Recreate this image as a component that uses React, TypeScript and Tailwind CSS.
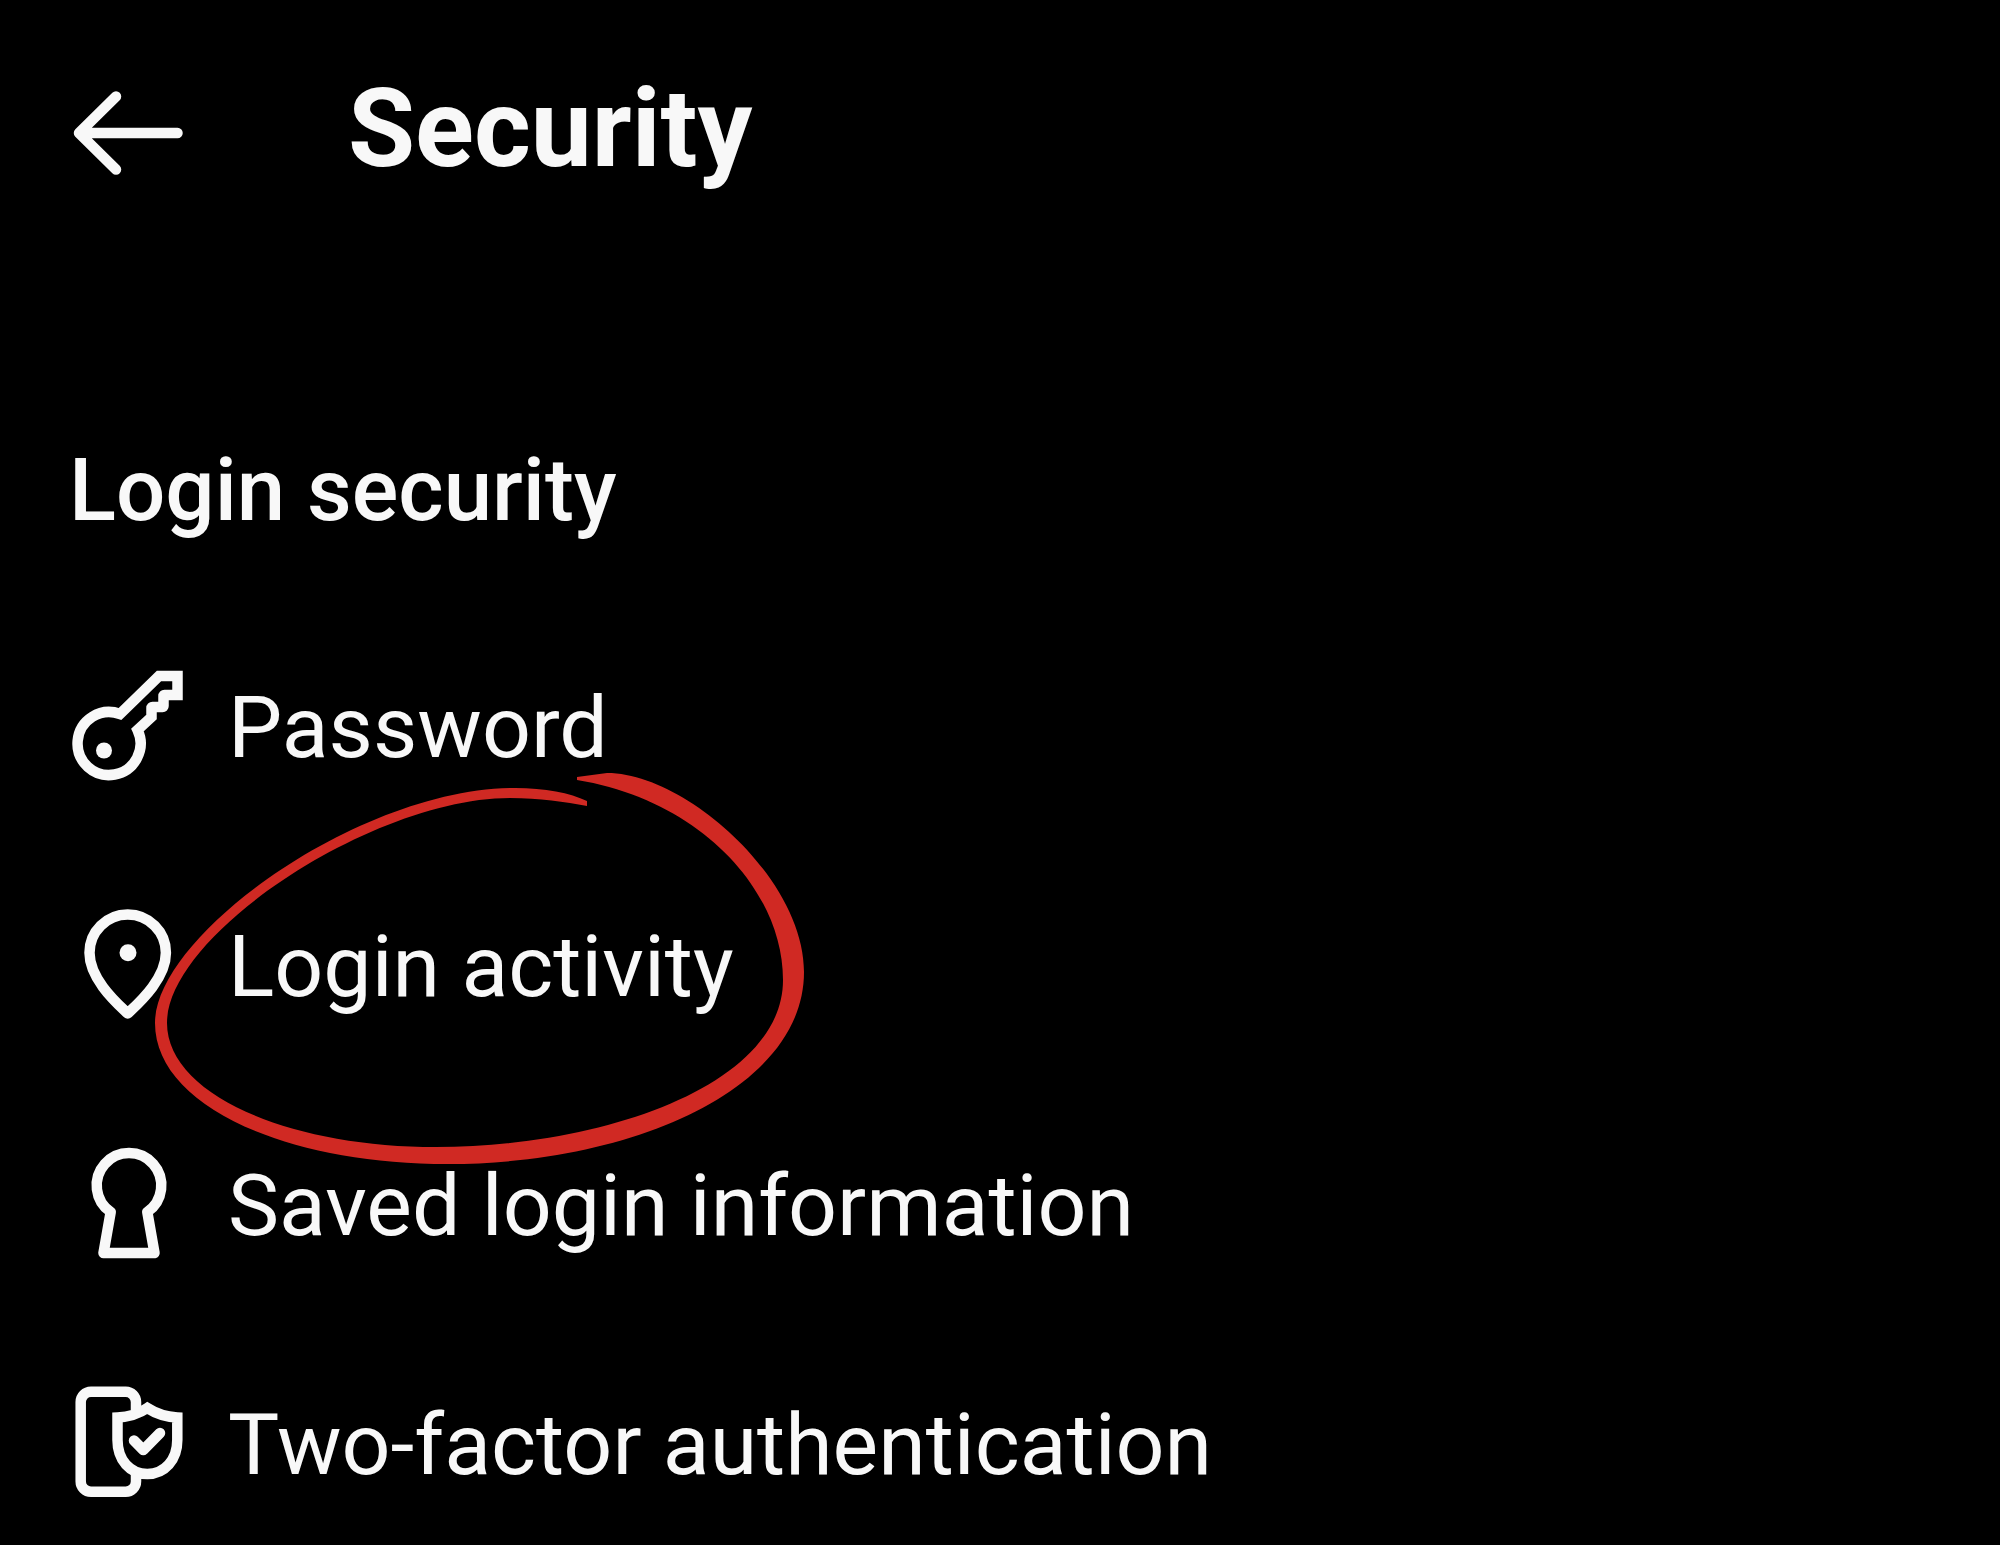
import type { ReactNode } from "react";

const Icon = ({ children }: { children: ReactNode }) => (
  <svg
    viewBox="0 0 112 112"
    className="size-28 shrink-0"
    fill="none"
    stroke="currentColor"
    strokeWidth={10.5}
    strokeLinejoin="round"
    strokeLinecap="round"
    aria-hidden="true"
  >
    {children}
  </svg>
);

const BackIcon = () => (
  <Icon>
    <path d="M105.5 56H8M44 19.5L7 56L44 92.5" />
  </Icon>
);

const KeyIcon = () => (
  <Icon>
    <path
      strokeLinejoin="miter"
      d="M48 45L87 7H105.5V26H92.5Q91.5 26 91.5 27V37Q91.5 38 90.5 38H80.5Q79.5 38 79.5 39V48L65.5 61A31.5 31.5 0 1 1 48 45Z"
    />
    <circle cx="32" cy="81.5" r="8" fill="currentColor" stroke="none" />
  </Icon>
);

const PinIcon = () => (
  <Icon>
    <path d="M55.7 105.5C47 97 17.5 72 17.5 44.8A38.2 38.2 0 0 1 93.9 44.8C93.9 72 64.4 97 55.7 105.5Z" />
    <circle cx="56" cy="44.7" r="8.5" fill="currentColor" stroke="none" />
  </Icon>
);

const KeyholeIcon = () => (
  <Icon>
    <path d="M38.7 65A32.3 32.3 0 1 1 75.3 65L82.5 106H31.5Z" />
  </Icon>
);

const DeviceShieldIcon = () => (
  <Icon>
    <path
      strokeLinecap="butt"
      d="M64 24V16A10.3 10.3 0 0 0 53.7 5.7H19A10.3 10.3 0 0 0 8.7 16V95.4A10.3 10.3 0 0 0 19 105.7H53.7A10.3 10.3 0 0 0 64 95.4V86"
    />
    <path
      strokeLinejoin="miter"
      d="M75.3 22C68 27 58 30.8 45.5 31.5V54C45.5 74 58 88 75.3 88S105.3 74 105.3 54V31.5C93 30.8 83 27 75.3 22Z"
    />
    <path d="M62 54.5L71.3 64L88 47" />
  </Icon>
);

// hand drawn marker loop, thicker on the right side
const MarkerLoop = () => (
  <svg
    viewBox="150 768 660 400"
    className="pointer-events-none absolute -top-[140px] left-[78px] h-[400px] w-[660px] max-w-none text-[#d02923]"
    fill="currentColor"
    aria-hidden="true"
  >
    <path d="M577 777L607 773C685 773 804 878 804 972C804 1090 630 1164 448 1164C284 1164 155 1105 155 1023C155 935 360 788 515 788C545 788 570 793 587 801V806C565 802 540 798 510 798C374 798 167 934 167 1023C167 1095 290 1147 436 1147C604 1147 783 1085 783 980C783 890 700 800 577 780Z" />
  </svg>
);

const items = [
  { label: "Password", icon: KeyIcon },
  { label: "Login activity", icon: PinIcon, marked: true },
  { label: "Saved login information", icon: KeyholeIcon },
  { label: "Two-factor authentication", icon: DeviceShieldIcon },
];

const App = () => {
  return (
    <main className="min-h-screen overflow-x-hidden bg-black pt-[77px] pb-12 font-[Roboto,sans-serif] text-[#f8f8f8]">
      <header className="flex h-28 items-center gap-41 pl-18">
        <button type="button" aria-label="Back">
          <BackIcon />
        </button>
        <h1 className="pb-2 text-[109px] leading-[112px] font-bold">Security</h1>
      </header>

      <section className="mt-[251px]">
        <h2 className="pl-[69px] text-[87px] leading-[100px] font-medium">Login security</h2>
        <ul className="mt-[129px] flex flex-col gap-[127px] pl-18">
          {items.map(({ label, icon: ItemIcon, marked }) => (
            <li key={label} className="relative">
              <button type="button" className="flex h-28 items-center gap-11 text-left">
                <ItemIcon />
                <span className="pt-1.5 text-[86px] leading-[100px] whitespace-nowrap">{label}</span>
              </button>
              {marked && <MarkerLoop />}
            </li>
          ))}
        </ul>
      </section>
    </main>
  );
};

export default App;
